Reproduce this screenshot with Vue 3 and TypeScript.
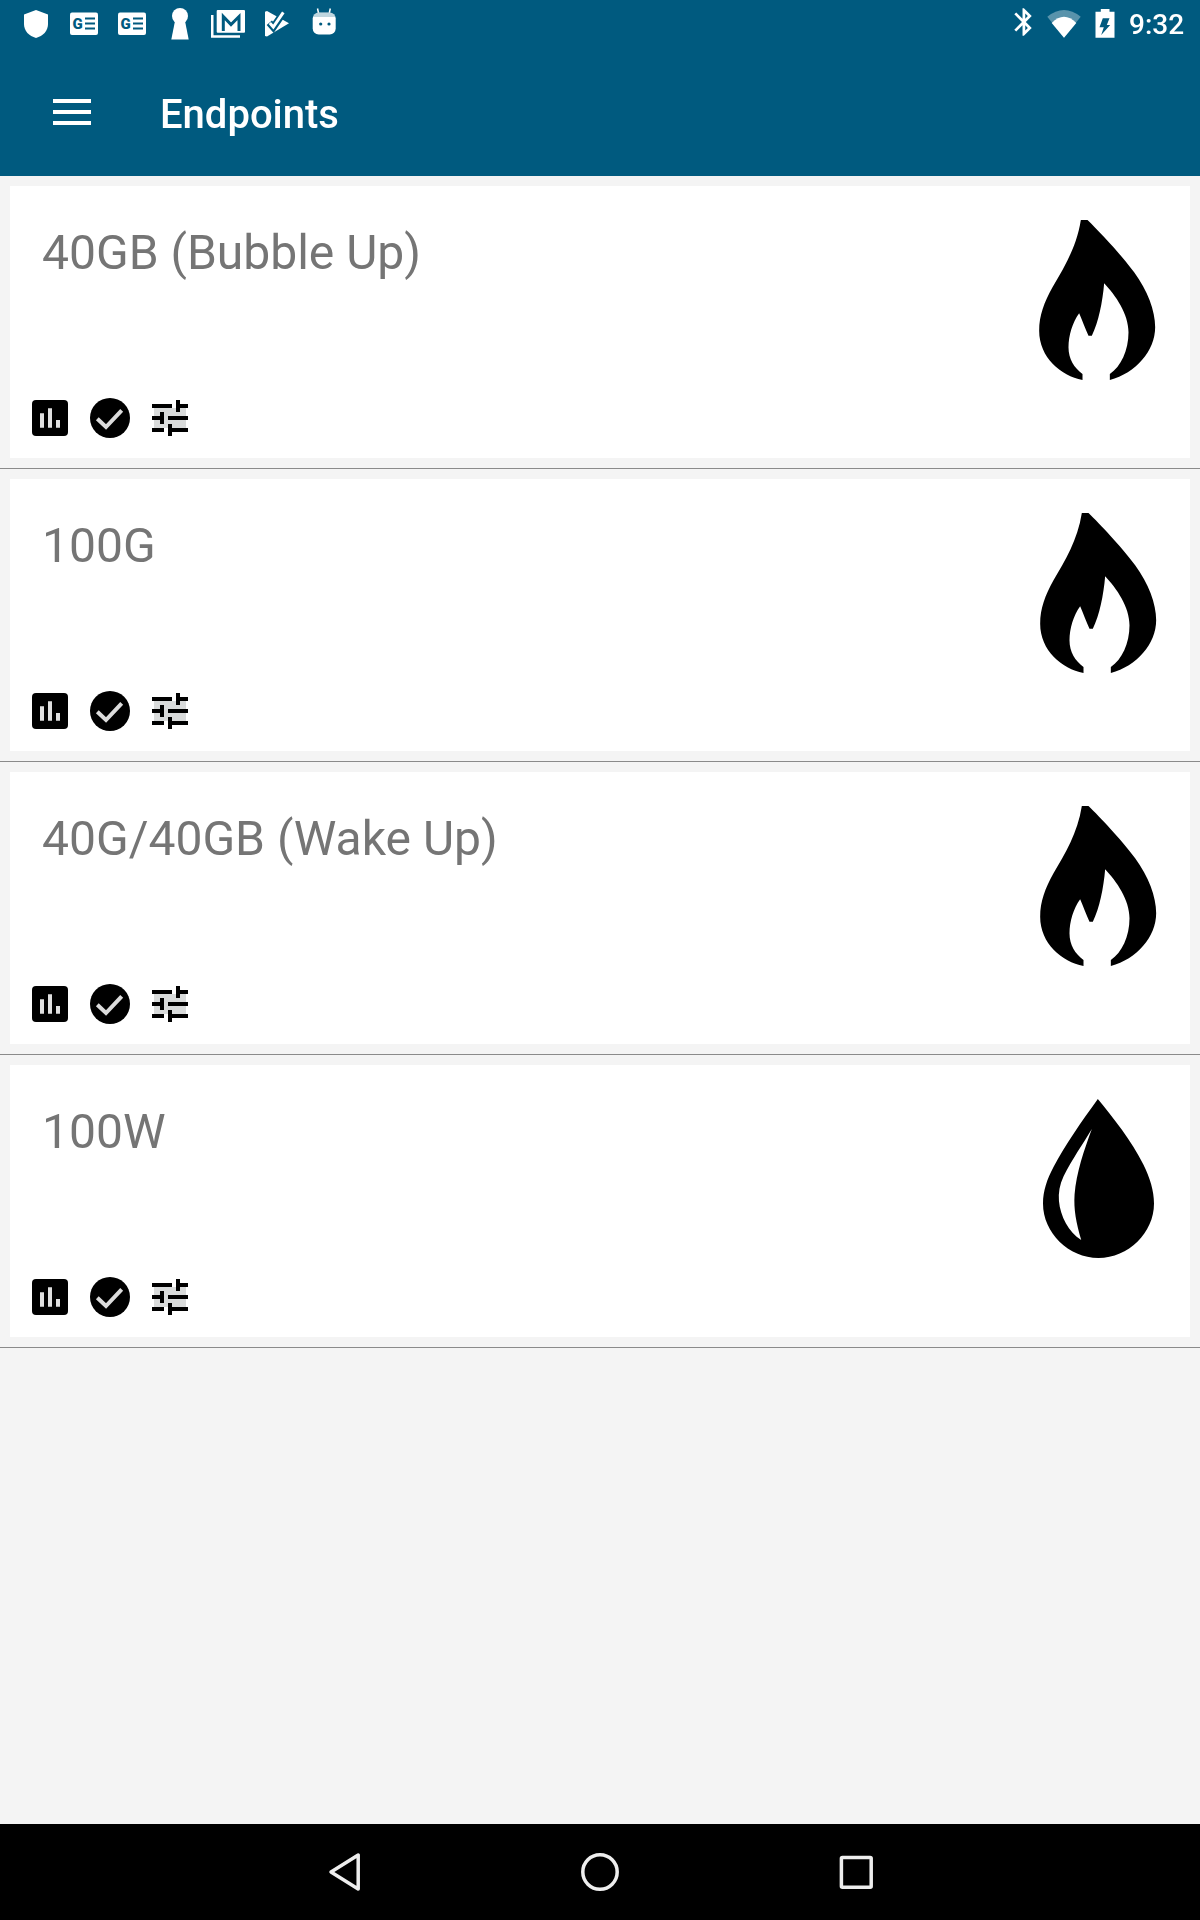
<template>
  <div class="app">
    <div class="status-bar">
      <div class="status-left">
        <!-- shield -->
        <svg viewBox="0 0 48 48"><path class="w" d="M24 10 36 14.5V24C36 31 31 36 24 38 17 36 12 31 12 24V14.5Z" /></svg>
        <!-- news x2 -->
        <svg v-for="n in 2" :key="n" viewBox="0 0 48 48">
          <rect class="w" x="10" y="12.5" width="28" height="22.5" rx="2" />
          <text x="12.6" y="29.4" class="g">G</text>
          <path class="t" d="M25 17.5h10v2H25zM25 22.5h10v2H25zM25 27.5h10v2H25z" />
        </svg>
        <!-- keyhole -->
        <svg viewBox="0 0 48 48">
          <circle class="w" cx="24" cy="16" r="8" />
          <path class="w" d="M19 21H29L32.7 39.5H15.3Z" />
        </svg>
        <!-- gmail stack -->
        <svg viewBox="0 0 48 48">
          <path class="w" d="M7 15H9.5V35.3H36V37.7H7Z" />
          <rect class="w" x="12.7" y="10" width="28.3" height="22.7" rx="1" />
          <path class="m" d="M19.3 31V16.5L27 24.5 35 16.5V31" />
        </svg>
        <!-- tasks -->
        <svg viewBox="0 0 48 48">
          <path class="w" d="M13 11.8 15 11 37 23.3 15 36.6 13 36Z" />
          <path class="ck1" d="M17.3 22.7 21.3 27.3 31.3 12.7" />
          <path class="ck2" d="M17.8 23 21.3 27 31.3 12.3" />
        </svg>
        <!-- android -->
        <svg viewBox="0 0 48 48">
          <path class="ant" d="M17.5 8.5 18.5 13M30.3 8.5 29.3 13" />
          <rect class="w" x="12.7" y="12.5" width="23" height="22" rx="6" />
          <path class="fade" d="M12.7 17C13 14 15 12.5 18.7 12.5H29.7C33 12.5 35.4 14 35.7 17Z" />
          <circle class="t" cx="20.7" cy="24" r="1.6" />
          <circle class="t" cx="29" cy="24" r="1.6" />
        </svg>
      </div>
      <div class="status-right">
        <svg class="bt" viewBox="0 0 24 48">
          <path class="w" transform="translate(3.3 8.3) scale(1.37) translate(-5 -2)" d="M17.71 7.71L12 2h-1v7.59L6.41 5 5 6.41 10.59 12 5 17.59 6.41 19 11 14.41V22h1l5.71-5.71-4.3-4.29 4.3-4.29zM13 5.83l1.88 1.88L13 9.59V5.83zm1.88 10.46L13 18.17v-3.76l1.88 1.88z" />
        </svg>
        <svg class="wifi" viewBox="0 0 36 48">
          <path class="w dim" d="M1.3 16.7Q18 3.3 34.7 16.7L18 37.7Z" />
          <path class="w" d="M5.7 23Q18 10.4 30.3 23L18 37.7Z" />
        </svg>
        <svg class="bat" viewBox="0 0 24 48">
          <path class="w" d="M7.8 9H16.5V11.7H21.5V37.7H2.5V11.7H7.8Z" />
          <path class="t" d="M9.8 18.3H16.5L13.8 25H17.2L8.2 35 10.8 27.3H6.5Z" />
        </svg>
        <span class="clock">9:32</span>
      </div>
    </div>

    <header class="toolbar">
      <div class="burger"><i /><i /><i /></div>
      <h1 class="title">Endpoints</h1>
    </header>

    <main class="list">
      <div v-for="ep in endpoints" :key="ep.name" class="row">
        <div class="card">
          <div class="left">
            <div class="name">{{ ep.name }}</div>
            <div class="actions">
              <svg class="act" viewBox="0 0 36 36">
                <rect width="36" height="36" rx="4" />
                <path class="lt" d="M8 13.3h4v14.4H8zM16 8.3h4v19.4h-4zM24 20h4v7.7h-4z" />
              </svg>
              <svg class="check" viewBox="0 0 40 40">
                <circle cx="20" cy="20" r="20" />
                <path class="tick" d="M7.3 20.7 16 29 31.7 12.3" />
              </svg>
              <svg class="act" viewBox="3 3 18 18">
                <rect class="shade" x="4" y="7" width="16" height="10" />
                <path d="M3 17v2h6v-2H3zM3 5v2h10V5H3zm10 16v-2h8v-2h-8v-2h-2v6h2zM7 9v2H3v2h4v2h2V9H7zm14 4v-2H11v2h10zm-6-4h2V7h4V5h-4V3h-2v6z" />
              </svg>
            </div>
          </div>
          <svg v-if="ep.kind === 'flame'" class="flame" viewBox="60 38 350 480">
            <path d="M185 38H205C240 72 300 135 345 195 385 250 408 310 408 360 408 430 350 498 272 518V500C305 478 328 430 328 375 328 320 290 265 255 228 250 285 238 345 218 385H208C198 365 190 340 180 318 160 345 148 385 148 420 148 455 165 482 190 500V518C125 505 60 450 60 370 60 325 75 285 100 240 135 180 172 120 185 38Z" />
          </svg>
          <svg v-else class="drop" viewBox="128 58 334 478">
            <path fill-rule="evenodd" d="M293 58C340 115 395 185 430 255 450 295 462 335 462 372 462 460 385 536 295 536 205 536 128 460 128 372 128 335 140 300 160 262 195 195 245 125 293 58ZM275 148C250 190 215 240 190 290 178 315 174 340 176 365 180 410 205 460 243 482 228 430 220 390 223 345 228 280 252 210 275 148Z" />
          </svg>
        </div>
      </div>
    </main>

    <nav class="navbar">
      <svg viewBox="0 0 48 48"><path class="nv" d="M11 24 38.2 7V41Z" /></svg>
      <svg viewBox="0 0 48 48"><circle class="nv" cx="24" cy="24" r="17.2" /></svg>
      <svg viewBox="0 0 48 48"><rect class="nv" x="9.4" y="9.4" width="29.8" height="29.8" rx="1" /></svg>
    </nav>
  </div>
</template>

<script setup lang="ts">
interface Endpoint {
  name: string;
  kind: 'flame' | 'drop';
}

const endpoints: Endpoint[] = [
  { name: '40GB (Bubble Up)', kind: 'flame' },
  { name: '100G', kind: 'flame' },
  { name: '40G/40GB (Wake Up)', kind: 'flame' },
  { name: '100W', kind: 'drop' },
];
</script>

<style scoped>
.app {
  display: flex;
  flex-direction: column;
  width: 1200px;
  height: 1920px;
  background: #f4f4f4;
  font-family: Roboto, "Liberation Sans", sans-serif;
}

.status-bar {
  display: flex;
  justify-content: space-between;
  height: 48px;
  background: #005a7f;
  color: #fff;
}

.status-left {
  display: flex;
  padding-left: 12px;
}

.status-left svg {
  width: 48px;
  height: 48px;
}

.status-right {
  display: flex;
  align-items: center;
  padding-right: 16px;
}

.status-right svg {
  height: 48px;
}

.bt { width: 24px; margin-right: 11px; }
.wifi { width: 36px; margin-right: 11.5px; }
.bat { width: 24px; margin-right: 11.5px; }

.clock {
  font-size: 28px;
  font-weight: 500;
  line-height: 48px;
  padding-top: 2px;
  will-change: transform;
}

.w { fill: #fff; }
.t { fill: #005a7f; }
.dim { opacity: 0.35; }
.g {
  font-family: Roboto, sans-serif;
  font-size: 15px;
  font-weight: 900;
  fill: #005a7f;
}
.m {
  fill: none;
  stroke: #005a7f;
  stroke-width: 3;
}
.ck1 {
  fill: none;
  stroke: #005a7f;
  stroke-width: 7;
}
.ck2 {
  fill: none;
  stroke: #fff;
  stroke-width: 3;
}
.ant {
  fill: none;
  stroke: #fff;
  stroke-width: 1.5;
}
.fade {
  fill: #005a7f;
  opacity: 0.25;
}

.toolbar {
  display: flex;
  align-items: center;
  height: 128px;
  background: #005a7f;
}

.burger {
  display: flex;
  flex-direction: column;
  gap: 7px;
  width: 38px;
  margin-left: 53px;
}

.burger i {
  display: block;
  height: 4px;
  background: #fff;
}

.title {
  margin: 5px 0 0 69px;
  font-size: 40px;
  font-weight: 500;
  color: #fff;
  will-change: transform;
}

.list {
  flex: 1;
}

.row {
  padding: 10px;
  border-bottom: 1px solid #8a8a8a;
}

.card {
  display: flex;
  justify-content: space-between;
  height: 272px;
  background: #fff;
}

.left {
  display: flex;
  flex-direction: column;
  justify-content: space-between;
  padding: 39px 0 20px 22px;
}

.name {
  margin-left: 10px;
  font-size: 48px;
  line-height: 56px;
  color: #757575;
  will-change: transform;
}

.actions {
  display: flex;
  align-items: center;
  gap: 22px;
}

.act {
  display: block;
  width: 36px;
  height: 36px;
}

.check {
  display: block;
  width: 40px;
  height: 40px;
}

.lt { fill: #e0e0e0; }
.shade { fill: #d9dbdb; }

.tick {
  fill: none;
  stroke: #dcdcdc;
  stroke-width: 4;
}

/* the big glyphs are upscaled bitmaps in the app, hence the soft edge */
.flame {
  width: 117px;
  height: 160px;
  margin: 34px 33px 0 0;
  filter: blur(0.7px);
}

.row:first-child .flame {
  margin-right: 34px;
}

.drop {
  width: 111px;
  height: 159px;
  margin: 34px 36px 0 0;
  filter: blur(0.7px);
}

.navbar {
  display: flex;
  justify-content: center;
  align-items: center;
  gap: 208px;
  height: 96px;
  background: #000;
}

.navbar svg {
  width: 48px;
  height: 48px;
}

.nv {
  fill: none;
  stroke: #eee;
  stroke-width: 3.5;
  stroke-linejoin: round;
}
</style>
